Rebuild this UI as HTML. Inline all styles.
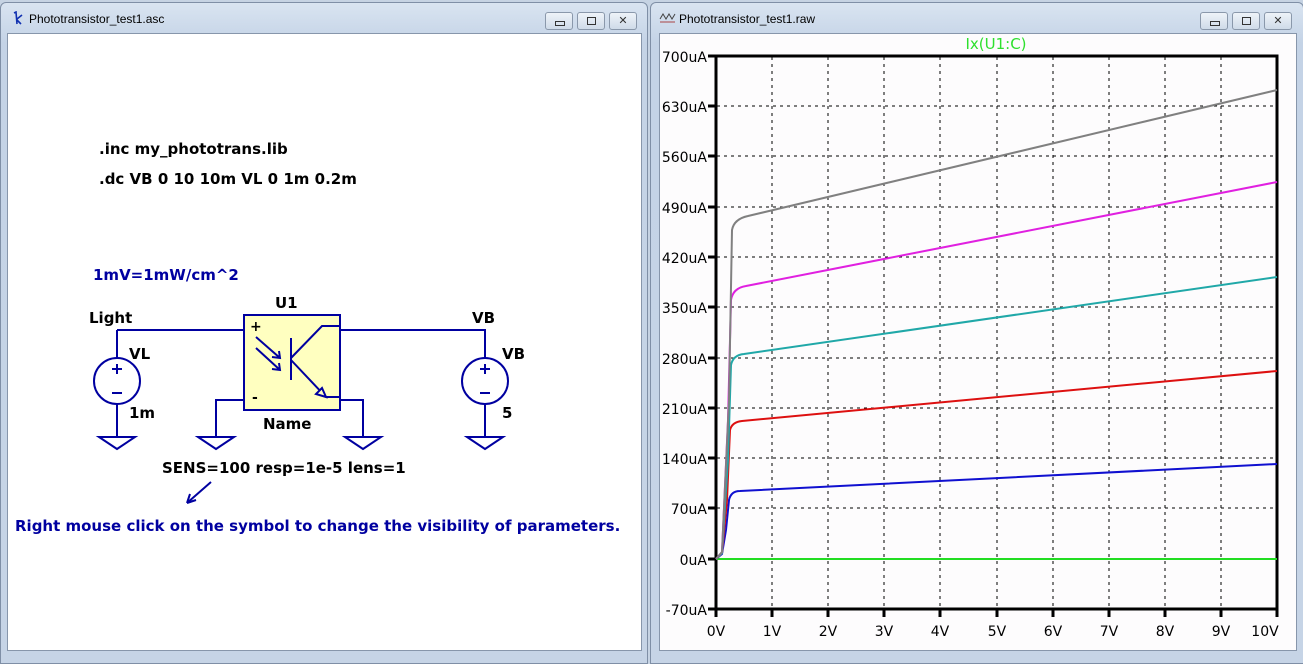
<!DOCTYPE html>
<html><head><style>
body{margin:0;width:1303px;height:647px;overflow:hidden;background:#c6d3e3;font-family:"Liberation Sans",sans-serif;position:relative}
.win{position:absolute;background:linear-gradient(#d9e4f1,#c4d3e6 40px,#c6d4e6);border:1px solid #7f8fa6;border-radius:6px 6px 0 0}
.title{position:absolute;top:9px;left:28px;font-size:12px;color:#000}
.btn{position:absolute;top:9px;width:26px;height:16px;border:1px solid #8a98ab;border-radius:3px;background:linear-gradient(#eef3f9,#cfdbe9)}
.client{position:absolute;background:#fff;border:1px solid #8796ab}
.t{position:absolute;font-weight:bold;font-size:15px;font-family:"DejaVu Sans",sans-serif;white-space:nowrap}
</style></head><body>
<div class="win" style="left:0;top:2px;width:646px;height:660px">
 <svg style="position:absolute;left:10px;top:8px" width="14" height="16"><path d="M3 2L5 1L6 13M6 8L11 4M6 9L10 13" stroke="#1030b0" stroke-width="1.6" fill="none"/></svg>
 <div class="title">Phototransistor_test1.asc</div>
 <div class="btn" style="left:544px"><div style="position:absolute;left:9px;top:8px;width:8px;height:3px;border:1px solid #333"></div></div>
 <div class="btn" style="left:576px"><div style="position:absolute;left:9px;top:4px;width:7px;height:6px;border:1px solid #333"></div></div>
 <div class="btn" style="left:608px;text-align:center;font-size:11px;color:#333;line-height:16px">✕</div>
 <div class="client" style="left:6px;top:30px;width:633px;height:616px"></div>
</div>
<div class="win" style="left:650px;top:2px;width:652px;height:660px">
 <svg style="position:absolute;left:8px;top:8px" width="18" height="14"><path d="M1 8L4 3L7 8L10 3L13 8L16 3" stroke="#444" fill="none"/><path d="M1 11L16 11" stroke="#a44" /></svg>
 <div class="title">Phototransistor_test1.raw</div>
 <div class="btn" style="left:549px"><div style="position:absolute;left:9px;top:8px;width:8px;height:3px;border:1px solid #333"></div></div>
 <div class="btn" style="left:581px"><div style="position:absolute;left:9px;top:4px;width:7px;height:6px;border:1px solid #333"></div></div>
 <div class="btn" style="left:613px;text-align:center;font-size:11px;color:#333;line-height:16px">✕</div>
 <div class="client" style="left:8px;top:30px;width:636px;height:616px;background:#fdfcfd"></div>
</div>

<svg style="position:absolute;left:0;top:0" width="647" height="647">
 <g stroke="#0000a0" stroke-width="2" fill="none">
  <path d="M117 330H244M340 330H485V358M485 404V437M117 330V358M117 404V437M244 400H216V437M340 400H363V437M211 482L187 503"/>
  <path d="M99 437h36l-18 12zM198 437h36l-18 12zM345 437h36l-18 12zM467 437h36l-18 12zM187 503l3-9M187 503l9-3"/>
  <circle cx="117" cy="381" r="23"/><circle cx="485" cy="381" r="23"/>
  <path d="M117 364v10M112 369h10M112 393h10M485 364v10M480 369h10M480 393h10"/>
 </g>
 <rect x="244" y="315" width="96" height="95" fill="#ffffc0" stroke="#0000a0" stroke-width="2"/>
 <g stroke="#0000a0" stroke-width="2" fill="none">
  <path d="M291 338V380M291 358L322 326H340M291 360L326 397H340M256 337L280 358M256 348L280 370M272 357l8 1-1-7M272 369l8 1-1-7"/>
  <path d="M316 394l10 3-4-9z" fill="#ffffc0"/>
 </g>
 <text x="250" y="331" font-family="DejaVu Sans" font-weight="bold" font-size="14" fill="#000">+</text>
 <text x="252" y="402" font-family="DejaVu Sans" font-weight="bold" font-size="14" fill="#000">-</text>
</svg>
<div class="t" style="left:99px;top:140px">.inc my_phototrans.lib</div>
<div class="t" style="left:99px;top:170px">.dc VB 0 10 10m VL 0 1m 0.2m</div>
<div class="t" style="left:93px;top:266px;color:#0000a0">1mV=1mW/cm^2</div>
<div class="t" style="left:89px;top:309px">Light</div>
<div class="t" style="left:275px;top:294px">U1</div>
<div class="t" style="left:472px;top:309px">VB</div>
<div class="t" style="left:129px;top:345px">VL</div>
<div class="t" style="left:502px;top:345px">VB</div>
<div class="t" style="left:129px;top:404px">1m</div>
<div class="t" style="left:502px;top:404px">5</div>
<div class="t" style="left:263px;top:415px">Name</div>
<div class="t" style="left:162px;top:459px">SENS=100 resp=1e-5 lens=1</div>
<div class="t" style="left:15px;top:517px;color:#0000a0">Right mouse click on the symbol to change the visibility of parameters.</div>

<svg style="position:absolute;left:0;top:0" width="1303" height="647" font-family="DejaVu Sans" font-size="14">
 <g stroke="#000" stroke-dasharray="3,4" stroke-width="1">
  <path d="M772 57V608M828 57V608M884 57V608M940 57V608M997 57V608M1053 57V608M1109 57V608M1165 57V608M1221 57V608"/>
  <path d="M717 106H1276M717 156H1276M717 207H1276M717 257H1276M717 307H1276M717 358H1276M717 408H1276M717 458H1276M717 508H1276"/>
 </g>
 <rect x="716" y="56" width="561" height="553" fill="none" stroke="#000" stroke-width="3"/>
 <g stroke="#000" stroke-width="3">
  <path d="M708 56h8M708 106h8M708 156h8M708 207h8M708 257h8M708 307h8M708 358h8M708 408h8M708 458h8M708 508h8M708 559h8M708 609h8"/>
  <path d="M716 609v8M772 609v8M828 609v8M884 609v8M940 609v8M997 609v8M1053 609v8M1109 609v8M1165 609v8M1221 609v8M1277 609v8"/>
 </g>
 <g text-anchor="end" fill="#000">
  <text x="707" y="62">700uA</text><text x="707" y="112">630uA</text><text x="707" y="162">560uA</text><text x="707" y="213">490uA</text><text x="707" y="263">420uA</text><text x="707" y="313">350uA</text><text x="707" y="364">280uA</text><text x="707" y="414">210uA</text><text x="707" y="464">140uA</text><text x="707" y="514">70uA</text><text x="707" y="565">0uA</text><text x="707" y="615">-70uA</text>
 </g>
 <g text-anchor="middle" fill="#000">
  <text x="716" y="636">0V</text><text x="772" y="636">1V</text><text x="828" y="636">2V</text><text x="884" y="636">3V</text><text x="940" y="636">4V</text><text x="997" y="636">5V</text><text x="1053" y="636">6V</text><text x="1109" y="636">7V</text><text x="1165" y="636">8V</text><text x="1221" y="636">9V</text><text x="1265" y="636">10V</text>
 </g>
 <text x="996" y="49" text-anchor="middle" fill="#2ee02e" font-size="15">Ix(U1:C)</text>
 <g fill="none" stroke-width="2">
  <path d="M716 559H1277" stroke="#22dd22"/>
  <path d="M716 559L722 554L726 530L729 500Q731 491 740 491L1277 464" stroke="#1010d0"/>
  <path d="M716 559L722 553L727 500L730 430Q732 422 742 421L1277 371" stroke="#dd1010"/>
  <path d="M716 559L722 553L728 460L731 365Q733 355 744 354L1277 277" stroke="#20a8a8"/>
  <path d="M716 559L722 552L728 420L731 300Q733 288 746 286L1277 182" stroke="#e020e0"/>
  <path d="M716 559L722 552L729 400L732 230Q734 219 748 216L1277 90" stroke="#808080"/>
 </g>
</svg>
</body></html>
